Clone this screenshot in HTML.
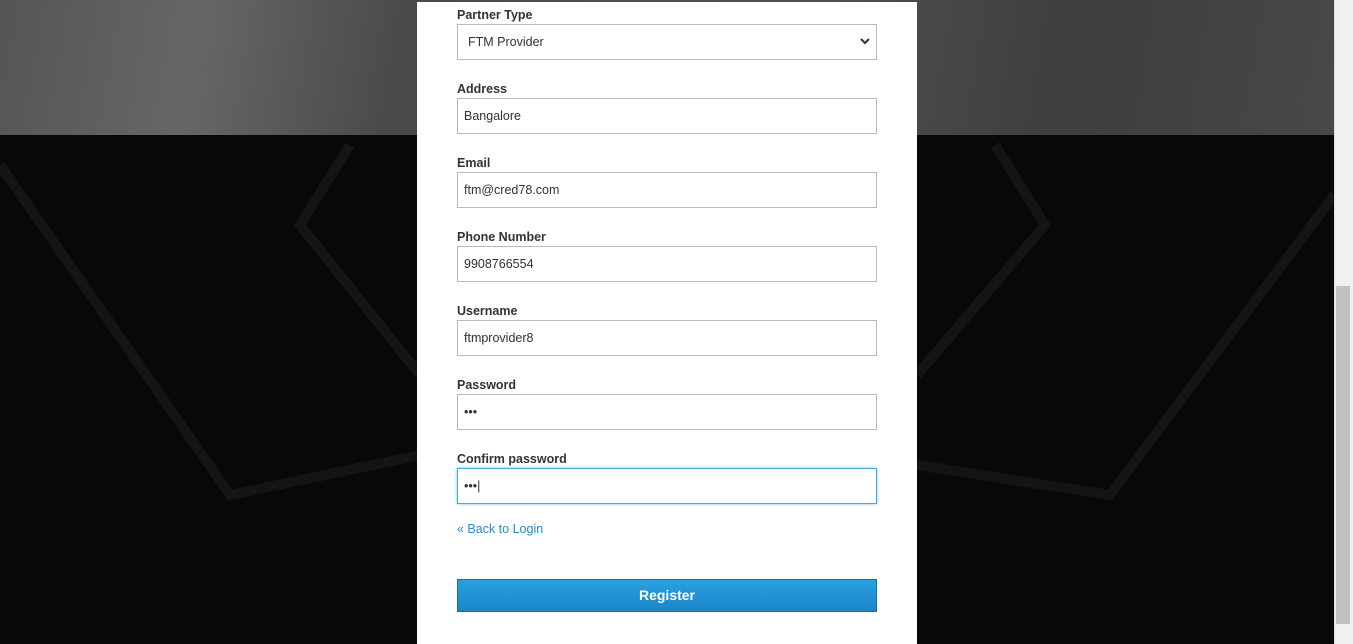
<!DOCTYPE html>
<html><head><style>
body{margin:0;width:1353px;height:644px;overflow:hidden;background:#080808;font-family:"Liberation Sans",sans-serif;position:relative}
.top{position:absolute;left:0;top:0;width:1334px;height:135px;background:linear-gradient(100deg,#555 0%,#666 15%,#4a4a4a 30%,#505050 60%,#3e3e3e 80%,#484848 100%)}
.card{position:absolute;left:417px;top:2px;width:500px;height:642px;background:#fff}
.lab{position:absolute;left:40px;font-size:12.5px;font-weight:bold;color:#333}
.inp{position:absolute;left:40px;width:418px;height:34px;border:1px solid #bbb;box-sizing:content-box;font-size:12.5px;color:#333;line-height:34px;text-indent:6px}
.sb{position:absolute;left:1334px;top:0;width:19px;height:644px;background:#f0f0f0;border-left:1px solid #ddd}
.th{position:absolute;left:1336px;top:286px;width:14px;height:338px;background:#c1c1c1}
</style></head><body>
<div class="top"></div>
<svg style="position:absolute;left:0;top:135px" width="1334" height="509">
<g fill="none" stroke="#141414" stroke-width="10">
<polyline points="0,30 230,360 420,320"/>
<polyline points="350,10 300,90 420,240"/>
<polyline points="1334,60 1110,360 917,330"/>
<polyline points="995,10 1045,90 917,240"/>
</g></svg>
<div class="card">
<div class="lab" style="top:6px">Partner Type</div>
<div class="inp" style="top:22px;text-indent:10px">FTM Provider<svg style="position:absolute;right:6px;top:13px" width="10" height="8"><path d="M1 1l4 4 4-4" stroke="#333" stroke-width="2" fill="none"/></svg></div>
<div class="lab" style="top:80px">Address</div>
<div class="inp" style="top:96px">Bangalore</div>
<div class="lab" style="top:154px">Email</div>
<div class="inp" style="top:170px">ftm@cred78.com</div>
<div class="lab" style="top:228px">Phone Number</div>
<div class="inp" style="top:244px">9908766554</div>
<div class="lab" style="top:302px">Username</div>
<div class="inp" style="top:318px">ftmprovider8</div>
<div class="lab" style="top:376px">Password</div>
<div class="inp" style="top:392px">•••</div>
<div class="lab" style="top:450px">Confirm password</div>
<div class="inp" style="top:466px;border-color:#4aa8e0;box-shadow:0 0 3px #7cc4f0">•••|</div>
<div style="position:absolute;left:40px;top:520px;font-size:12.5px;color:#2a8ad0">« Back to Login</div>
<div style="position:absolute;left:40px;top:577px;width:418px;height:31px;border:1px solid #1a6fa8;background:linear-gradient(#2aa0e0,#1a86c8);color:#fff;font-weight:bold;font-size:14px;text-align:center;line-height:31px">Register</div>
</div>
<div class="sb"></div><div class="th"></div>
</body></html>
